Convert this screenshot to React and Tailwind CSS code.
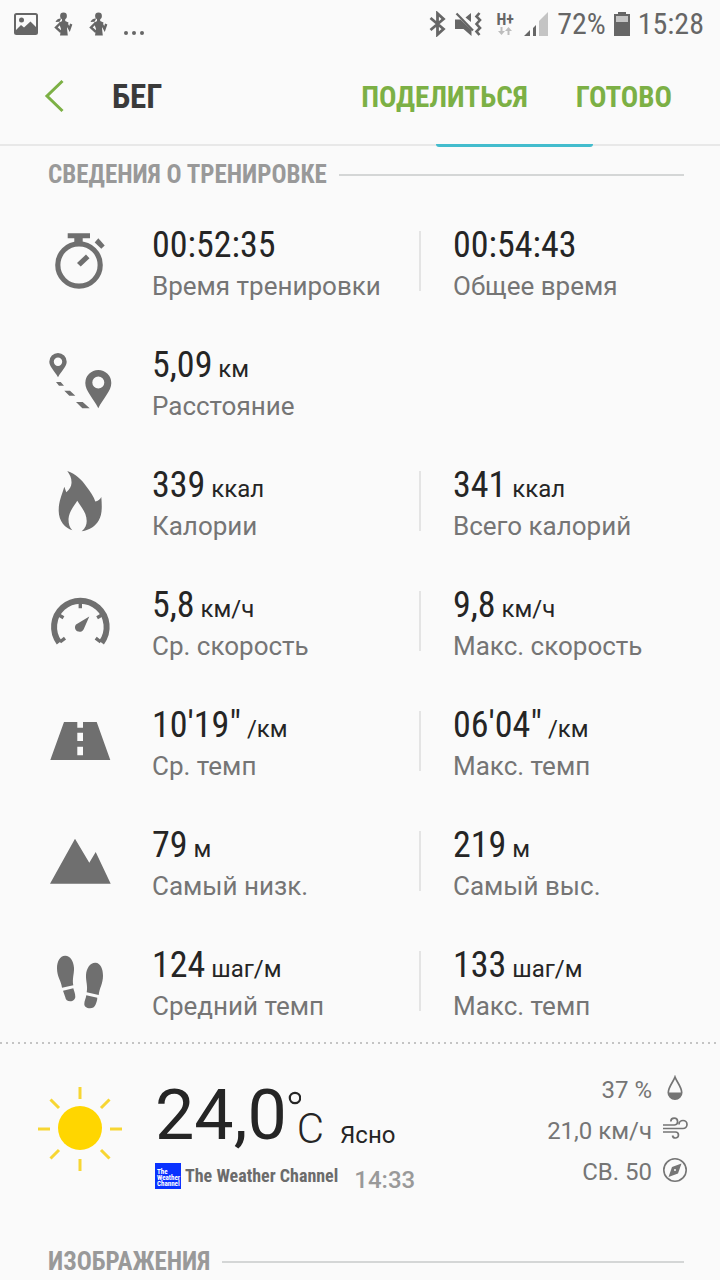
// App.jsx
const condensed = "font-['Roboto_Condensed',Roboto,sans-serif]";

const StopwatchIcon = () => (
  <svg viewBox="0 0 64 64" className="w-16 h-16" fill="currentColor" aria-hidden="true">
    <circle cx="31" cy="36" r="21.2" fill="none" stroke="currentColor" strokeWidth="5.2" />
    <path d="M19.7 4.3H42v5h-7.3V14h-8.4V9.3h-6.6z" />
    <path d="M50.3 9.2l6.4 7.2-3.4 3.3-6.6-6.3z" />
    <path d="M38 25.5l3.5 3.7-8.8 8.2-3.7-3.5z" />
  </svg>
);

const RouteIcon = () => (
  <svg viewBox="0 0 64 64" className="w-16 h-16" fill="currentColor" fillRule="evenodd" aria-hidden="true">
    <path d="M10 4a8.7 8.7 0 0 0-8.7 8.7c0 5 5 8.6 8.7 15.6 3.7-7 8.7-10.6 8.7-15.6A8.7 8.7 0 0 0 10 4zm0 4.5a4.2 4.2 0 1 1 0 8.4 4.2 4.2 0 0 1 0-8.4z" />
    <path d="M50.3 21a13 13 0 0 0-13 13c0 8 8 15 13 25.3 5-10.3 13-17.3 13-25.3a13 13 0 0 0-13-13zm0 6.6a6 6 0 1 1 0 12 6 6 0 0 1 0-12z" />
    <path d="M8 33h4.7l3.3 3.7h-5zM16.3 41.7H22l5.3 5h-6zM28 53h6.7l7 6.3h-7.4z" />
  </svg>
);

const FlameIcon = () => (
  <svg viewBox="0 0 64 64" className="w-16 h-16" fill="currentColor" aria-hidden="true">
    <path d="M19.3 2C28 5 34 11 38 17c4.5 6 8 11 9.3 15.5 2.7-.5 4.7-2 6-4.5 1 12 .5 18-2.6 23.5C47.5 57 42 61 33.7 62.3c3.6-3 5-6.3 5-10.3 0-8-5-13-9.4-20.3C25 38.5 21 43 20.5 50c0 5 1 8.5 3.8 11.3-7-2-13.6-9.3-13.6-19.3 0-10 2.6-14 5.6-24.3l2 5.6c3.5-3 5-5.8 5.2-9.3C23.7 9 22 6 19.3 2z" />
  </svg>
);

const GaugeIcon = () => (
  <svg viewBox="0 0 64 64" className="w-16 h-16" fill="none" stroke="currentColor" aria-hidden="true">
    <path d="M11.2 53.6a26.3 26.3 0 1 1 42.3 0" strokeWidth="6" />
    <path d="M32.3 12v7.3M10 25.5l5.5 3.2M54.6 25.5l-5.5 3.2M12 53l5-3.8M52.7 53l-5-3.8" strokeWidth="3.4" />
    <path d="M41.3 27.5L28 35.5c-3 4 1 8.5 5.5 7 1-.5 1.8-1.2 2.2-2.2z" fill="currentColor" stroke="none" />
  </svg>
);

const RoadIcon = () => (
  <svg viewBox="0 0 64 64" className="w-16 h-16" fill="currentColor" fillRule="evenodd" aria-hidden="true">
    <path d="M16 13h13.3v5.7H35V13h13.7l13.6 38h-60zM29.3 23.7V32H35v-8.3zm0 14v8.6H35v-8.6z" />
  </svg>
);

const MountainIcon = () => (
  <svg viewBox="0 0 64 64" className="w-16 h-16" fill="currentColor" aria-hidden="true">
    <path d="M27 9.7l14.3 24L47.7 23l15 31.700H2z" />
  </svg>
);

const StepsIcon = () => (
  <svg viewBox="0 0 64 64" className="w-16 h-16" fill="currentColor" aria-hidden="true">
    <path d="M17 6.7c5-.3 8.500 5 9 12 .3 6-2 11-.7 17.600L14 38.700C13.300 32 9 28 9 19.300c0-7 3-12.300 8-12.600z" />
    <path d="M15 41.7l10.300-2.400c.7 3 2 5 2 8.400 0 2.500-2.300 4.600-5 4.600-3 0-4.600-1.600-5-4z" />
    <path d="M47.5 13.7c5 .3 7.500 6 7.500 13 0 8-3.500 12-4.300 19.300l-12-2.700C40 37 37.700 32 38 26c.4-7 4.500-12.600 9.500-12.300z" />
    <path d="M38.3 46.3l11 2.400c0 2.600-1 5-1.800 7-.9 2.300-3 3.600-5.500 3.600-3.500 0-5.700-1.700-5.700-4.300 0-3 1.500-5 2-8.700z" />
  </svg>
);

const SunIcon = () => (
  <svg viewBox="0 0 88 88" className="w-[88px] h-[88px] shrink-0" aria-hidden="true">
    <circle cx="44" cy="43" r="22" fill="#ffd600" />
    <path
      d="M44 2v12M44 74v12M2 44h12M74 44h12M14.5 14.5l8.5 8.5M65 65l8.5 8.5M73.5 14.5L65 23M23 65l-8.5 8.5"
      stroke="#f7d633"
      strokeWidth="3"
    />
  </svg>
);

const DropIcon = () => (
  <svg viewBox="0 0 26 26" className="w-[26px] h-[26px] mb-1" aria-hidden="true">
    <path d="M13 2C11 7.5 6.3 12 6.3 17.5a6.7 6.7 0 0 0 13.4 0C19.7 12 15 7.5 13 2z" fill="none" stroke="currentColor" strokeWidth="1.7" />
    <path d="M6.3 17.5h13.4a6.7 6.7 0 0 1-13.4 0z" fill="currentColor" />
  </svg>
);

const WindIcon = () => (
  <svg viewBox="0 0 26 26" className="w-[26px] h-[26px] mb-1" fill="none" stroke="currentColor" strokeWidth="1.7" aria-hidden="true">
    <path d="M1 9h11.5a3.4 3.4 0 1 0-3.7-3.4M1 12.5h20a4 4 0 1 0-4-4M1 16h12.5a3 3 0 1 1-3 3.5" />
  </svg>
);

const CompassIcon = () => (
  <svg viewBox="0 0 26 26" className="w-[26px] h-[26px] mb-1" aria-hidden="true">
    <circle cx="13" cy="13" r="11.2" fill="none" stroke="currentColor" strokeWidth="1.6" />
    <path d="M19.5 6.5l-3.5 10L6.5 20 10 10z" fill="currentColor" />
    <circle cx="13" cy="13" r="1" fill="#fafafa" />
  </svg>
);

const RunnerIcon = () => (
  <svg viewBox="0 0 19 24" className="w-[19px] h-6" fill="currentColor" aria-hidden="true">
    <circle cx="9.5" cy="4" r="3.4" />
    <path d="M1.5 10C3 7 5 6.300 7.300 6.600L5.500 9.800z" />
    <path d="M8 6h3.200v3l3.300 1.500-1.500 6 .8 7H6l1-6.500L5 11l3-2z" />
    <path d="M7 10.500l-5 5 5 4.500M12.500 11.500l3 5.500 1.700-5" fill="none" stroke="currentColor" strokeWidth="2.4" />
  </svg>
);

const metrics = [
  {
    Icon: StopwatchIcon,
    items: [
      { value: '00:52:35', label: 'Время тренировки' },
      { value: '00:54:43', label: 'Общее время' },
    ],
  },
  { Icon: RouteIcon, items: [{ value: '5,09', unit: 'км', label: 'Расстояние' }] },
  {
    Icon: FlameIcon,
    items: [
      { value: '339', unit: 'ккал', label: 'Калории' },
      { value: '341', unit: 'ккал', label: 'Всего калорий' },
    ],
  },
  {
    Icon: GaugeIcon,
    items: [
      { value: '5,8', unit: 'км/ч', label: 'Ср. скорость' },
      { value: '9,8', unit: 'км/ч', label: 'Макс. скорость' },
    ],
  },
  {
    Icon: RoadIcon,
    items: [
      { value: '10\'19"', unit: '/км', label: 'Ср. темп' },
      { value: '06\'04"', unit: '/км', label: 'Макс. темп' },
    ],
  },
  {
    Icon: MountainIcon,
    items: [
      { value: '79', unit: 'м', label: 'Самый низк.' },
      { value: '219', unit: 'м', label: 'Самый выс.' },
    ],
  },
  {
    Icon: StepsIcon,
    items: [
      { value: '124', unit: 'шаг/м', label: 'Средний темп' },
      { value: '133', unit: 'шаг/м', label: 'Макс. темп' },
    ],
  },
];

const conditions = [
  { text: '37 %', Icon: DropIcon },
  { text: '21,0 км/ч', Icon: WindIcon },
  { text: 'СВ. 50', Icon: CompassIcon },
];

const StatusBar = () => (
  <div className={`${condensed} flex items-center justify-between h-12 pl-3.5 pr-4 text-[#666666]`}>
    <div className="flex items-center gap-4">
      <svg viewBox="0 0 24 24" className="w-6 h-6" aria-hidden="true">
        <rect x="1" y="2" width="22" height="20" rx="1.5" fill="none" stroke="currentColor" strokeWidth="2" />
        <circle cx="7.5" cy="8" r="2.5" fill="currentColor" />
        <path d="M2 18l5-5 3 2.5 6.5-6L22 15v7H2z" fill="currentColor" />
      </svg>
      <RunnerIcon />
      <RunnerIcon />
      <svg viewBox="0 0 24 24" className="w-6 h-6" fill="currentColor" aria-hidden="true">
        <circle cx="2" cy="21" r="2" />
        <circle cx="10" cy="21" r="2" />
        <circle cx="18" cy="21" r="2" />
      </svg>
    </div>
    <div className="flex items-center gap-2">
      <svg viewBox="0 0 18 26" className="w-[18px] h-[26px]" fill="none" stroke="currentColor" strokeWidth="2.8" aria-hidden="true">
        <path d="M1.5 7l13 11-6 5.5V2.5l6 5.5-13 11" />
      </svg>
      <svg viewBox="0 0 28 26" className="w-7 h-[26px]" fill="currentColor" aria-hidden="true">
        <path d="M0 8.5h5.5L16.5 19v6L8.5 18H0zM16 2v9L10.5 6.5z" />
        <path d="M1.5 2.5l16.5 17" stroke="currentColor" strokeWidth="2.2" />
        <path d="M24.5 2l-3 3.5 3.5 3.5-3.5 4 3.5 4-3.5 3.5 3 3.5" fill="none" stroke="currentColor" strokeWidth="2.6" />
      </svg>
      <div className="flex flex-col items-center w-6 pl-1">
        <span className="text-base leading-[14px] font-bold">H+</span>
        <svg viewBox="0 0 14 8" className="w-3.5 h-2" fill="#bdbdbd" aria-hidden="true">
          <path d="M2.5 0h2v4H7L3.5 8 0 4h2.5zM9.5 8h2V4H14l-3.5-4L7 4h2.5z" />
        </svg>
      </div>
      <svg viewBox="0 0 26 26" className="w-[26px] h-[26px]" aria-hidden="true">
        <path d="M16 10l9-9v24h-9z" fill="#c4c4c4" />
        <path d="M1 25l6-6v6zM10 17l3-3v11h-3z" fill="currentColor" />
      </svg>
      <span className="text-[30px] leading-9">72%</span>
      <svg viewBox="0 0 16 26" className="w-4 h-[26px]" aria-hidden="true">
        <path d="M4 1h8v2h4v22H0V3h4z" fill="currentColor" />
        <path d="M2 5h12v6H2z" fill="#c4c4c4" />
      </svg>
      <span className="text-[30px] leading-9">15:28</span>
    </div>
  </div>
);

const SectionTitle = ({ children }) => (
  <div className="flex items-center gap-3 h-9 pl-12 pr-9">
    <h2 className={`${condensed} text-[25px] leading-9 font-bold text-[#999999]`}>{children}</h2>
    <span className="flex-1 h-0.5 bg-[#d4d6d6]" />
  </div>
);

const Metric = ({ value, unit, label }) => (
  <div className="pt-1.5 whitespace-nowrap">
    <p className="h-11 leading-[44px] text-[#252525]">
      <span className={`${condensed} text-4xl leading-[44px]`}>{value}</span>
      {unit && <span className="text-2xl leading-[44px]"> {unit}</span>}
    </p>
    <p className="text-[26px] leading-[38px] text-[#757575]">{label}</p>
  </div>
);

const MetricRow = ({ Icon, items }) => (
  <li className="flex items-center gap-10 h-[120px] pl-12 pr-[34px]">
    <span className="shrink-0 text-[#6f6f6f]">
      <Icon />
    </span>
    <div className="flex-1 grid grid-cols-2">
      <Metric {...items[0]} />
      {items[1] && (
        <div className="flex items-center gap-8">
          <span className="w-0.5 h-[60px] bg-[#e4e4e4]" />
          <Metric {...items[1]} />
        </div>
      )}
    </div>
  </li>
);

const Weather = () => (
  <section className="flex items-start pl-9 pr-8 pt-[25px] h-[200px]">
    <div className="pt-4">
      <SunIcon />
    </div>
    <div className="pl-[31px] pt-2 whitespace-nowrap">
      <div className="flex items-end text-[#252525]">
        <span className="text-[70px] leading-[76px]">24,0</span>
        <span>
          <svg viewBox="0 0 14 14" className="block w-3.5 h-3.5" aria-hidden="true">
            <circle cx="8" cy="7" r="5.2" fill="none" stroke="currentColor" strokeWidth="2.2" />
          </svg>
          <span className="block pl-2.5 text-[42px] leading-[48px] font-light">C</span>
        </span>
        <span className="pl-4 text-2xl leading-9">Ясно</span>
      </div>
      <div className="flex items-end pt-2.5">
        <a href="#weather" className="flex items-center gap-1">
          <span
            className={`${condensed} flex flex-col justify-end w-[26px] h-[26px] pl-0.5 pb-0.5 bg-[#0a32ff] text-[7px] leading-[6px] font-bold text-white`}
          >
            <span>The</span>
            <span>Weather</span>
            <span>Channel</span>
          </span>
          <span className={`${condensed} text-lg leading-[26px] font-bold text-[#6b6b6b]`}>The Weather Channel</span>
        </a>
        <time className="pl-4 text-2xl leading-[18px] font-medium text-[#999999]">14:33</time>
      </div>
    </div>
    <ul className="ml-auto whitespace-nowrap text-[#757575]">
      {conditions.map(({ text, Icon }) => (
        <li key={text} className="flex items-center justify-end gap-2.5 h-[41px] text-2xl">
          {text}
          <Icon />
        </li>
      ))}
    </ul>
  </section>
);

const App = () => (
  <div className="bg-[#fafafa] font-[Roboto,sans-serif]">
    <StatusBar />

    {/* Toolbar */}
    <header className={`${condensed} relative flex items-center h-[98px] pl-11 pr-12 border-b-2 border-[#e8e8e8]`}>
      <button type="button" aria-label="Назад" className="text-[#7cb045]">
        <svg viewBox="0 0 20 34" className="w-5 h-[34px]" fill="none" stroke="currentColor" strokeWidth="3" aria-hidden="true">
          <path d="M18.5 2L3 17l15.5 15" />
        </svg>
      </button>
      <h1 className="pl-12 pt-0.5 text-[33px] leading-10 font-bold text-[#3a3a3a]">БЕГ</h1>
      <div className="flex gap-12 ml-auto pt-0.5 text-[29px] leading-10 font-bold text-[#7cb045]">
        <button type="button">ПОДЕЛИТЬСЯ</button>
        <button type="button">ГОТОВО</button>
      </div>
      <span className="absolute left-[60.5%] -bottom-[3px] w-[157px] h-[3px] rounded-b-sm bg-[#43bccd]" />
    </header>

    <main>
      <div className="pt-[11px] pb-2">
        <SectionTitle>СВЕДЕНИЯ О ТРЕНИРОВКЕ</SectionTitle>
      </div>
      <ul className="pb-px">
        {metrics.map((metric) => (
          <MetricRow key={metric.items[0].label} {...metric} />
        ))}
      </ul>
      <div className="h-0.5 bg-[repeating-linear-gradient(90deg,#c4c4c4_0_2px,transparent_2px_6px)]" />
      <Weather />
      <SectionTitle>ИЗОБРАЖЕНИЯ</SectionTitle>
    </main>
  </div>
);

export default App;
